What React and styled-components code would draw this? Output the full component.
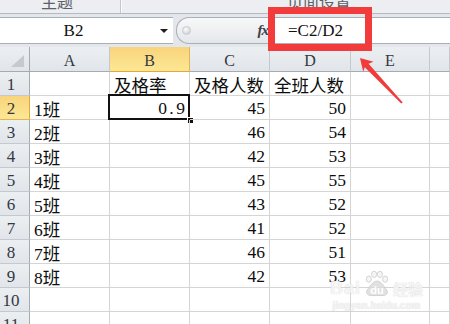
import React from 'react';
import styled, { createGlobalStyle } from 'styled-components';

const GlobalStyle = createGlobalStyle`
  html, body { margin: 0; padding: 0; background: #fff; }
  body { font-family: "Liberation Serif", "Noto Sans CJK SC", serif; }
`;

const Screen = styled.div`
  position: relative;
  width: 450px;
  height: 324px;
  overflow: hidden;
  display: flex;
  flex-direction: column;
  background: #e4e7eb;
`;

/* ribbon group labels, cut off at the top */
const Ribbon = styled.div`
  flex: none;
  height: 13px;
  display: flex;
  background: #eceef1;
  border-bottom: 1px solid #b4bac2;
  overflow: hidden;
`;

const RibbonGroup = styled.div`
  flex: none;
  width: ${({ $w }) => $w}px;
  padding-right: ${({ $pr }) => $pr || 0}px;
  display: flex;
  justify-content: center;
  border-right: 1px solid #c3c8cf;
  box-shadow: 1px 0 0 #fafbfc;
  margin-right: 2px;
`;

const GroupLabel = styled.span`
  font-family: "Noto Sans CJK SC", sans-serif;
  font-size: 16px;
  line-height: 16px;
  margin-top: -7px;
  color: #5b6068;
  white-space: nowrap;
`;

const Strip = styled.div`
  flex: none;
  height: ${({ $h }) => $h}px;
  background: #e3e6ea;
`;

const FormulaBar = styled.div`
  flex: none;
  height: 27px;
  display: flex;
  background: #e3e6ea;
`;

const NameBox = styled.div`
  width: 173px;
  display: flex;
  align-items: center;
  background: #fff;
  border-top: 1px solid #a9afb7;
  border-bottom: 1px solid #a9afb7;
  box-sizing: border-box;
  font-size: 17px;
  color: #111;
`;

const NameText = styled.span`
  width: 147px;
  text-align: center;
  padding-top: 1px;
`;

const DropArrow = styled.span`
  width: 0;
  height: 0;
  margin-left: 13px;
  border-left: 4px solid transparent;
  border-right: 4px solid transparent;
  border-top: 4px solid #1e1e1e;
`;

const Grip = styled.div`
  width: 96px;
  margin-left: 3px;
  display: flex;
  align-items: center;
  justify-content: space-between;
  box-sizing: border-box;
  padding: 0 4px 0 5px;
  border: 1px solid #a9afb7;
  border-right: none;
  border-radius: 13px 0 0 13px;
  background: linear-gradient(#f7f8f9, #e4e7ea);
`;

const GripDot = styled.span`
  width: 7px;
  height: 7px;
  border-radius: 50%;
  background: radial-gradient(circle at 40% 35%, #fdfdfd, #c3c7cc);
  border: 1px solid #c7cbd0;
`;

const Fx = styled.span`
  font-family: "Liberation Serif", serif;
  font-style: italic;
  font-weight: bold;
  font-size: 15px;
  color: #3d4249;
  letter-spacing: -1px;
`;

const FormulaInput = styled.div`
  flex: 1;
  display: flex;
  align-items: center;
  padding: 1px 0 0 16px;
  background: #fff;
  border-top: 1px solid #a9afb7;
  border-bottom: 1px solid #a9afb7;
  font-size: 17px;
  color: #111;
`;

/* worksheet */
const Sheet = styled.div`
  flex: 1;
  display: grid;
  grid-template-columns: 30px 80px 80px 80px 81px 79px 1fr;
  grid-template-rows: 25px;
  grid-auto-rows: 24px;
  background: #fff;
`;

const headerBg = ({ $active }) =>
  $active ? 'linear-gradient(#f8d47c, #fde794)' : 'linear-gradient(#eceff2, #e1e5e9)';

const Corner = styled.div`
  display: flex;
  justify-content: flex-end;
  align-items: flex-end;
  padding: 0 5px 4px 0;
  background: ${headerBg};
  border-right: 1px solid #a3abb5;
  border-bottom: 1px solid #a3abb5;
  box-sizing: border-box;
`;

const CornerMark = styled.span`
  width: 0;
  height: 0;
  border-left: 13px solid transparent;
  border-bottom: 12px solid #c6cacf;
`;

const ColHead = styled.div`
  display: flex;
  align-items: center;
  justify-content: center;
  padding-top: 3px;
  box-sizing: border-box;
  background: ${headerBg};
  border-right: 1px solid ${({ $active }) => ($active ? '#e2b45a' : '#c3c9d0')};
  border-bottom: 1px solid ${({ $active }) => ($active ? '#e2a83c' : '#a3abb5')};
  font-size: 16px;
  color: #333842;
`;

const RowHead = styled.div`
  display: flex;
  align-items: center;
  justify-content: center;
  padding: 2px 7px 0 0;
  box-sizing: border-box;
  background: ${headerBg};
  border-right: 1px solid ${({ $active }) => ($active ? '#e2a83c' : '#a3abb5')};
  border-bottom: 1px solid ${({ $active }) => ($active ? '#e2b45a' : '#c3c9d0')};
  font-size: 17px;
  color: #333842;
`;

const Cell = styled.div`
  position: relative;
  display: flex;
  align-items: center;
  justify-content: ${({ $num }) => ($num ? 'flex-end' : 'flex-start')};
  padding: 2px 4px 0 4px;
  box-sizing: border-box;
  border-right: 1px solid #d5d5d5;
  border-bottom: 1px solid #d5d5d5;
  font-size: 17.5px;
  color: #0d0d0d;
  white-space: nowrap;

  ${({ $selected }) =>
    $selected &&
    `
    &::before {
      content: '';
      position: absolute;
      left: -2px; top: -2px; right: -1px; bottom: -1px;
      border: 2px solid #111;
    }
    &::after {
      content: '';
      position: absolute;
      right: -4px; bottom: -4px;
      width: 5px; height: 5px;
      background: #111;
      border: 1px solid #fff;
      border-right: none;
      border-bottom: none;
    }
  `}
`;

const HalfChar = styled.span`
  display: inline-block;
  width: 9px;
  text-align: center;
`;

/* annotations laid over the screenshot */
const RedFrame = styled.div`
  position: absolute;
  left: 268px;
  top: 7px;
  width: 104px;
  height: 44px;
  box-sizing: border-box;
  border: 7px solid #f23c3c;
`;

const ArrowLayer = styled.svg`
  position: absolute;
  left: 0;
  top: 0;
  pointer-events: none;
`;

const Watermark = styled.div`
  position: absolute;
  left: 330px;
  top: 270px;
  display: flex;
  flex-direction: column;
  align-items: center;
  color: #f5f5f5;
  text-shadow: 0 0 1px #c4c4c4;
  opacity: 0.85;
`;

const MarkRow = styled.div`
  display: flex;
  align-items: flex-end;
  gap: 3px;
`;

const MarkWord = styled.span`
  font-family: ${({ $cjk }) => ($cjk ? '"Noto Sans CJK SC", sans-serif' : '"Liberation Sans", sans-serif')};
  font-weight: bold;
  font-size: ${({ $cjk }) => ($cjk ? 15 : 18)}px;
  line-height: 17px;
  letter-spacing: ${({ $cjk }) => ($cjk ? 0 : 1)}px;
`;

const Paw = styled.span`
  position: relative;
  width: 26px;
  height: 27px;
  display: inline-flex;
  align-items: flex-end;
  justify-content: center;
`;

const PawText = styled.span`
  position: relative;
  font-family: "Liberation Sans", sans-serif;
  font-weight: bold;
  font-size: 11px;
  line-height: 14px;
  color: #fff;
  text-shadow: none;
`;

const MarkUrl = styled.span`
  font-family: "Liberation Sans", sans-serif;
  font-weight: bold;
  font-size: 10px;
  line-height: 12px;
  margin-top: 3px;
`;

const rows = [
  ['', '及格率', '及格人数', '全班人数'],
  ['1班', '0.9', 45, 50],
  ['2班', '', 46, 54],
  ['3班', '', 42, 53],
  ['4班', '', 45, 55],
  ['5班', '', 43, 52],
  ['6班', '', 41, 52],
  ['7班', '', 46, 51],
  ['8班', '', 42, 53],
  ['', '', '', ''],
  ['', '', '', ''],
];

const columns = ['A', 'B', 'C', 'D', 'E', ''];

const isNum = (v) => typeof v === 'number' || /^[\d.]+$/.test(v);

const renderValue = (v) =>
  v === '0.9' ? v.split('').map((c, i) => <HalfChar key={i}>{c}</HalfChar>) : v;

const App = () => {
  return (
    <>
      <GlobalStyle />
      <Screen>
        <Ribbon>
          <RibbonGroup $w={114} $pr={6}>
            <GroupLabel>主题</GroupLabel>
          </RibbonGroup>
          <RibbonGroup $w={392}>
            <GroupLabel>页面设置</GroupLabel>
          </RibbonGroup>
        </Ribbon>
        <Strip $h={3} />
        <FormulaBar>
          <NameBox>
            <NameText>B2</NameText>
            <DropArrow />
          </NameBox>
          <Grip>
            <GripDot />
            <Fx>fx</Fx>
          </Grip>
          <FormulaInput>=C2/D2</FormulaInput>
        </FormulaBar>
        <Strip $h={3} />

        <Sheet>
          <Corner>
            <CornerMark />
          </Corner>
          {columns.map((c) => (
            <ColHead key={c || 'F'} $active={c === 'B'}>
              {c}
            </ColHead>
          ))}
          {rows.map((r, i) => (
            <React.Fragment key={i}>
              <RowHead $active={i === 1}>{i + 1}</RowHead>
              {r.map((v, j) => (
                <Cell key={j} $num={isNum(v)} $selected={i === 1 && j === 1}>
                  {renderValue(v)}
                </Cell>
              ))}
              <Cell />
              <Cell />
            </React.Fragment>
          ))}
        </Sheet>

        <RedFrame />
        <ArrowLayer width="450" height="324" viewBox="0 0 450 324">
          <polygon
            points="360,58 373.5,61.8 368.6,63.8 402.8,102.4 401.2,103.6 364.8,67.2 363.2,71.8"
            fill="#f23c3c"
          />
        </ArrowLayer>

        <Watermark>
          <MarkRow>
            <MarkWord>Bai</MarkWord>
            <Paw>
              <svg width="26" height="27" viewBox="0 0 27 27" style={{ position: 'absolute', left: 0, top: 0 }}>
                <g fill="#f5f5f5" stroke="#cacaca" strokeWidth="1">
                  <ellipse cx="5" cy="9" rx="2.6" ry="3.2" />
                  <ellipse cx="10.5" cy="4" rx="2.6" ry="3.2" />
                  <ellipse cx="16.5" cy="4" rx="2.6" ry="3.2" />
                  <ellipse cx="22" cy="9" rx="2.6" ry="3.2" />
                  <path d="M13.5 11 C9 11 6 17 3.5 20 C1.5 23 3.5 26 7 26 L20 26 C23.5 26 25.5 23 23.5 20 C21 17 18 11 13.5 11 Z" fill="#dcdcdc" />
                </g>
              </svg>
              <PawText>du</PawText>
            </Paw>
            <MarkWord $cjk>经验</MarkWord>
          </MarkRow>
          <MarkUrl>jingyan.baidu.com</MarkUrl>
        </Watermark>
      </Screen>
    </>
  );
};

export default App;
